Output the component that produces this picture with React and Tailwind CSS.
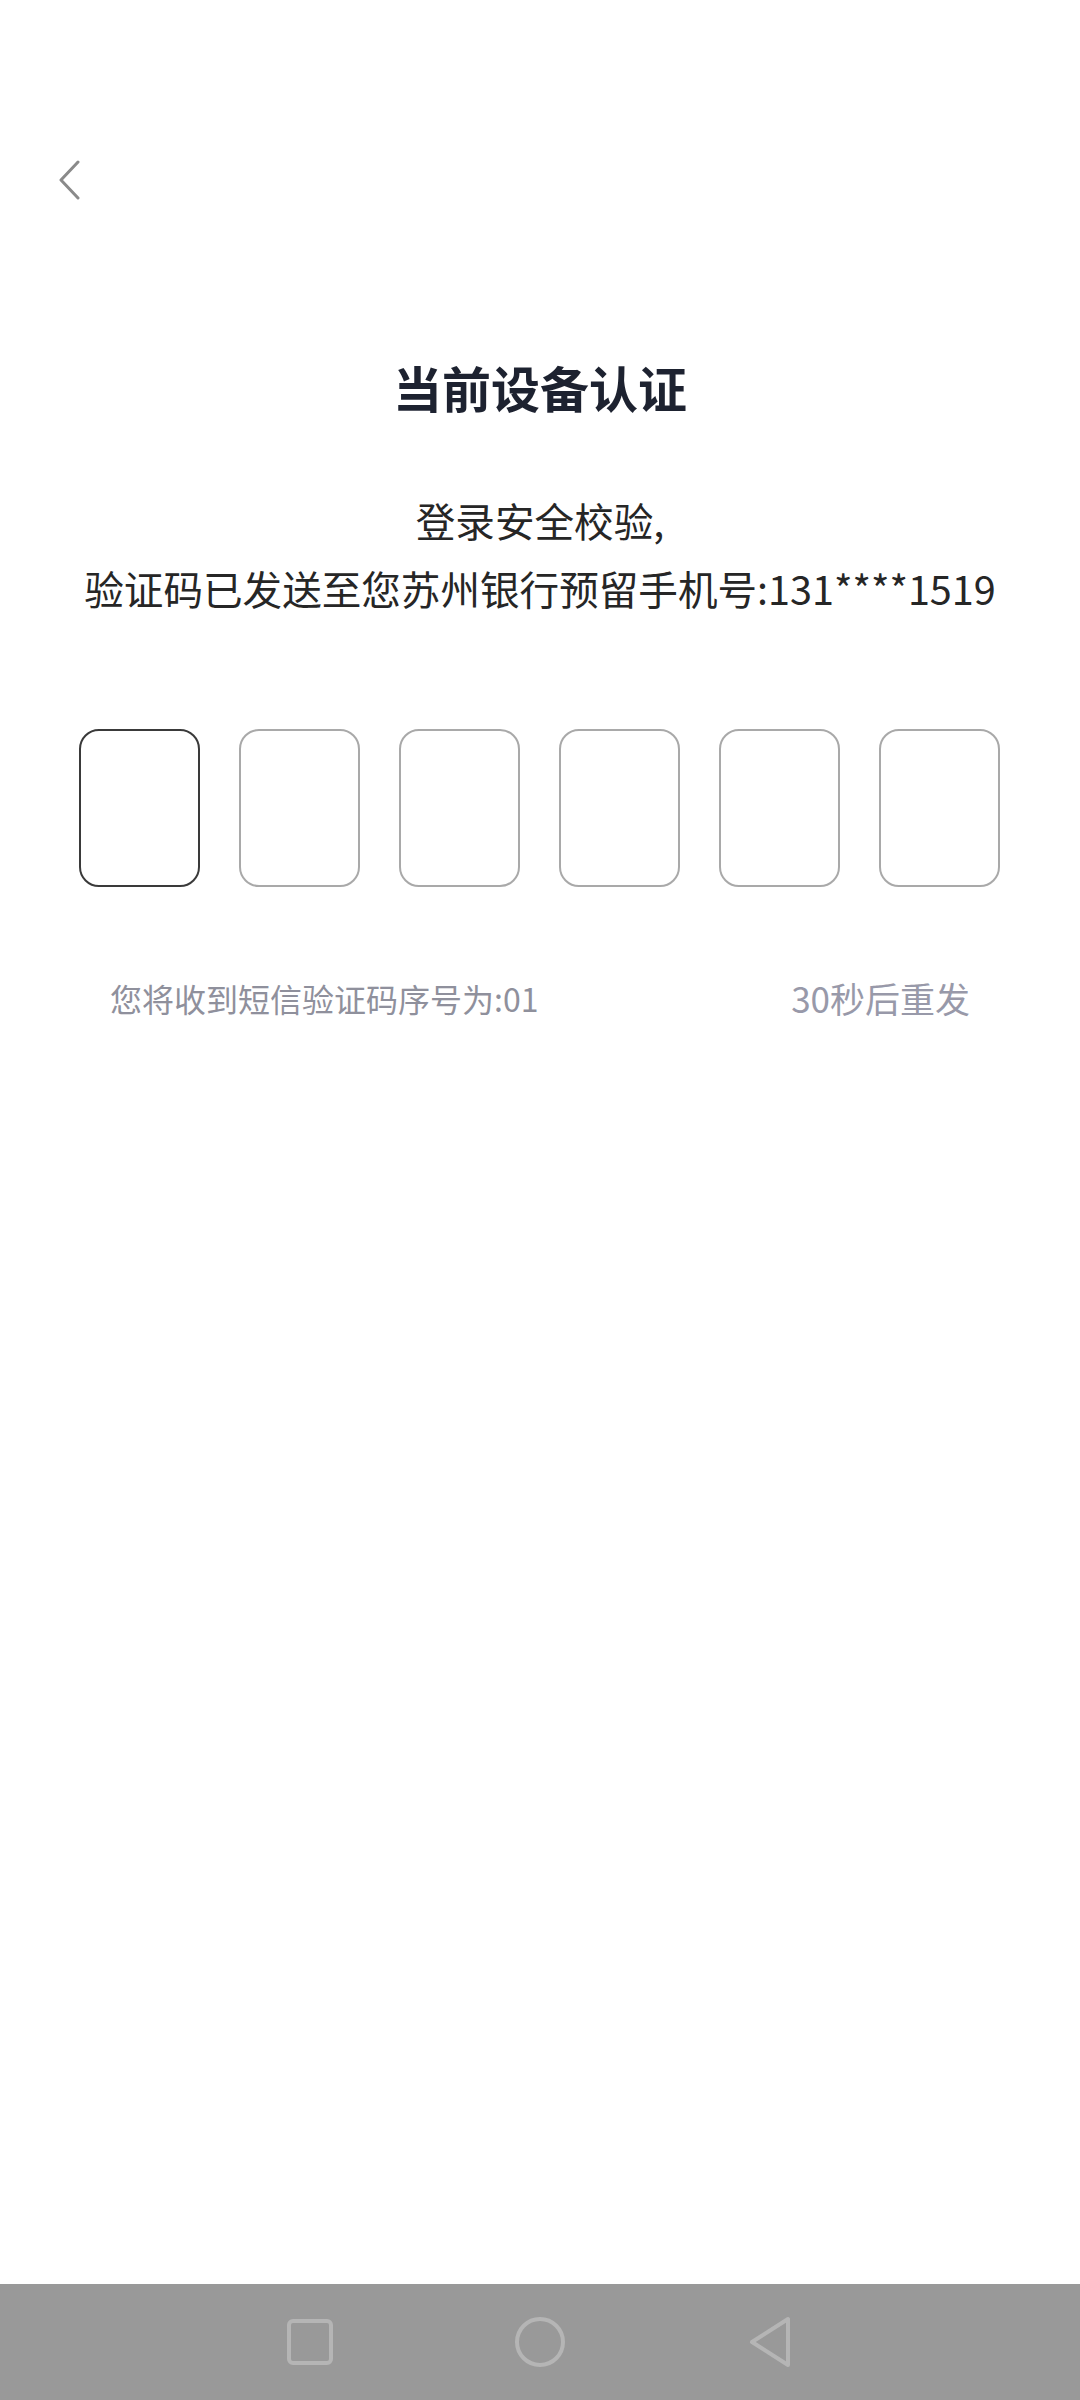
import React from "react";

const cjk = { fontFamily: '"Noto Sans CJK SC", "Noto Sans", sans-serif' };

const CodeBox = ({ active }) => (
    <div className={`w-[121px] h-[158px] rounded-[20px] border-2 bg-white ${active ? "border-[#3a3a3a]" : "border-[#a9a9a9]"}`} />
);

const App = () => {
    const boxes = [0, 1, 2, 3, 4, 5];

    return (
        <div className="w-[1080px] h-[2400px] bg-white flex flex-col" style={cjk}>
            {/* back */}
            <div className="pt-[160px] pl-[58px]">
                <svg width="24" height="40" viewBox="0 0 24 40" fill="none">
                    <path d="M20 2 L3 20 L20 38" stroke="#8a8a8a" strokeWidth="3" strokeLinecap="round" strokeLinejoin="round" />
                </svg>
            </div>

            <h1 className="mt-[159px] text-center text-[49px] leading-[56px] font-bold text-[#1d2230]">当前设备认证</h1>

            <div className="mt-[71px] text-center text-[39.6px] leading-[68px] text-[#262626]">
                <p>登录安全校验,</p>
                <p>验证码已发送至您苏州银行预留手机号:131****1519</p>
            </div>

            {/* code inputs */}
            <div className="mt-[107px] px-[79px] flex gap-[39px]">
                {boxes.map((i) => (
                    <CodeBox key={i} active={i === 0} />
                ))}
            </div>

            <div className="mt-[89px] pl-[110px] pr-[110px] flex justify-between items-center h-[44px]">
                <span className="text-[32px] text-[#8f909c]">您将收到短信验证码序号为:01</span>
                <span className="text-[35px] text-[#9899a9]">30秒后重发</span>
            </div>

            <div className="flex-1" />

            {/* system nav bar */}
            <div className="h-[116px] bg-[#999999] flex justify-center items-center gap-[180px]">
                <svg width="50" height="50" viewBox="0 0 50 50" fill="none">
                    <rect x="4" y="4" width="42" height="42" rx="4" stroke="#b5b5b5" strokeWidth="4" />
                </svg>
                <svg width="50" height="52" viewBox="0 0 50 52" fill="none">
                    <circle cx="25" cy="26" r="23" stroke="#b5b5b5" strokeWidth="4" />
                </svg>
                <svg width="50" height="52" viewBox="0 0 50 52" fill="none">
                    <path d="M43 3 L43 49 L7 26 Z" stroke="#b5b5b5" strokeWidth="4" strokeLinejoin="round" />
                </svg>
            </div>
        </div>
    );
};

export default App;
